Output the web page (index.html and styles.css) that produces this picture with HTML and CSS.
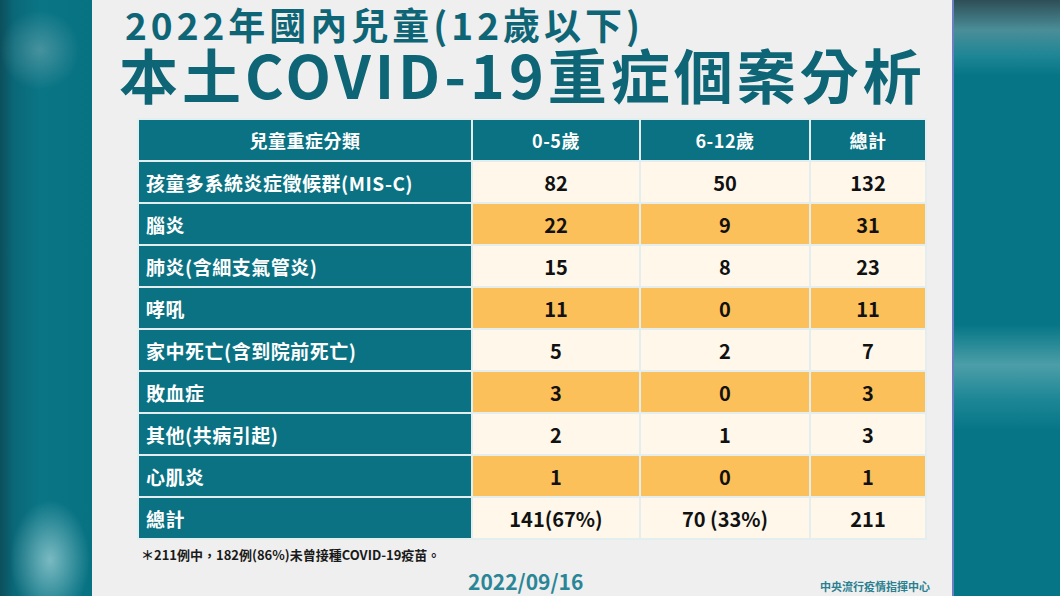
FILE: index.html
```html
<!DOCTYPE html>
<html lang="zh-Hant">
<head>
<meta charset="utf-8">
<title>2022年國內兒童(12歲以下)本土COVID-19重症個案分析</title>
<link rel="stylesheet" href="styles.css">
</head>
<body>
<div class="stage">
  <div class="side side-left"></div>
  <main class="panel">
    <h1 class="title">
      <span class="title-1">2022年國內兒童(12歲以下)</span>
      <span class="title-2">本土COVID-19重症個案分析</span>
    </h1>
    <table class="data">
      <colgroup>
        <col class="c-name"><col class="c-a"><col class="c-b"><col class="c-t">
      </colgroup>
      <thead>
        <tr><th>兒童重症分類</th><th>0-5歲</th><th>6-12歲</th><th>總計</th></tr>
      </thead>
      <tbody>
        <tr class="light"><th>孩童多系統炎症徵候群(MIS-C)</th><td>82</td><td>50</td><td>132</td></tr>
        <tr class="warm"><th>腦炎</th><td>22</td><td>9</td><td>31</td></tr>
        <tr class="light"><th>肺炎(含細支氣管炎)</th><td>15</td><td>8</td><td>23</td></tr>
        <tr class="warm"><th>哮吼</th><td>11</td><td>0</td><td>11</td></tr>
        <tr class="light"><th>家中死亡(含到院前死亡)</th><td>5</td><td>2</td><td>7</td></tr>
        <tr class="warm"><th>敗血症</th><td>3</td><td>0</td><td>3</td></tr>
        <tr class="light"><th>其他(共病引起)</th><td>2</td><td>1</td><td>3</td></tr>
        <tr class="warm"><th>心肌炎</th><td>1</td><td>0</td><td>1</td></tr>
        <tr class="light"><th>總計</th><td>141(67%)</td><td>70 (33%)</td><td>211</td></tr>
      </tbody>
    </table>
    <p class="note">＊211例中，182例(86%)未曾接種COVID-19疫苗。</p>
    <div class="foot">
      <span class="date">2022/09/16</span>
      <span class="org">中央流行疫情指揮中心</span>
    </div>
  </main>
  <div class="edge"></div>
  <div class="side side-right"></div>
</div>
</body>
</html>
```

FILE: styles.css
```css
* { box-sizing: border-box; }
html, body {
  margin: 0;
  padding: 0;
  width: 1060px;
  height: 596px;
  overflow: hidden;
  background: #067587;
  font-family: "Noto Sans CJK TC", "Noto Sans", "Liberation Sans", sans-serif;
}
.stage {
  display: flex;
  width: 1060px;
  height: 596px;
}
.side { flex: none; height: 596px; }
.side-left {
  width: 92px;
  background:
    radial-gradient(ellipse 40px 60px at 50px 560px, rgba(170,215,220,0.7), rgba(170,215,220,0) 100%),
    radial-gradient(ellipse 40px 40px at 40px 50px, rgba(110,165,175,0.6), rgba(110,165,175,0) 100%),
    linear-gradient(90deg, #0c4f5c 0px, #0a6878 14px, #0a7585 40px, #077282 92px);
}
.side-right {
  flex: 1;
  background: linear-gradient(180deg,
    #2e4e57 0px, #4a8e98 30px, #1f8696 55px, #067686 75px,
    #067686 325px, #4c9ea8 365px, #1c8696 400px, #067686 430px, #067686 596px);
}
.edge { width: 2px; flex: none; background: #6c7fc0; }
.panel {
  flex: none;
  width: 860px;
  height: 596px;
  background: #efefef;
  padding: 0 0 0 45px;
  display: flex;
  flex-direction: column;
}
.title {
  margin: 0;
  display: flex;
  flex-direction: column;
  color: #0d6576;
  font-weight: 700;
}
.title-1 {
  font-size: 37px;
  line-height: 48px;
  height: 48px;
  letter-spacing: 4px;
  margin-left: -12px;
  white-space: nowrap;
}
.title-2 {
  font-size: 59px;
  line-height: 51px;
  height: 51px;
  letter-spacing: 4px;
  margin-left: -18px;
  white-space: nowrap;
}
.data {
  margin-top: 19px;
  border-collapse: collapse;
  width: 788px;
  table-layout: fixed;
}
.c-name { width: 334px; }
.c-a { width: 168px; }
.c-b { width: 170px; }
.c-t { width: 116px; }
.data th, .data td {
  border: 2px solid #e4eeee;
  height: 42px;
  padding: 0;
  font-weight: 700;
}
.data thead th {
  background: #0a7282;
  color: #ffffff;
  font-size: 18px;
  letter-spacing: 0.5px;
  text-align: center;
}
.data tbody th {
  background: #0a7282;
  color: #ffffff;
  font-size: 19px;
  letter-spacing: 0.5px;
  text-align: left;
  padding-left: 7px;
}
.data tbody td {
  color: #111111;
  font-size: 20px;
  text-align: center;
}
.data tr.light td { background: #fef7ea; }
.data tr.warm td { background: #fcc05a; }
.note {
  margin: 5px 0 0 4px;
  font-size: 13px;
  font-weight: 700;
  color: #1a1a1a;
}
.foot {
  display: flex;
  align-items: flex-end;
  margin-top: 4px;
}
.date {
  margin-left: 331px;
  font-size: 21px;
  font-weight: 700;
  color: #2a8696;
  line-height: 26px;
}
.org {
  margin-left: auto;
  margin-right: 22px;
  font-size: 11px;
  font-weight: 700;
  color: #2a7f90;
  line-height: 16px;
}
```
